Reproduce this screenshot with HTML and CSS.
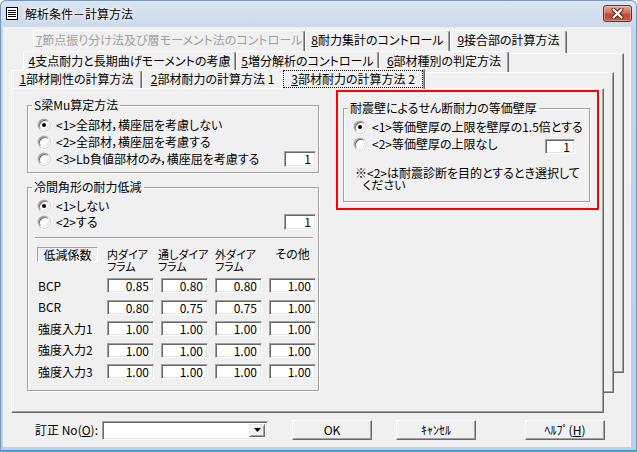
FILE: index.html
```html
<!DOCTYPE html>
<html lang="ja">
<head>
<meta charset="utf-8">
<title>解析条件－計算方法</title>
<link rel="stylesheet" href="styles.css">
</head>
<body>
<div class="window">
  <div class="titlebar">
    <svg class="appicon" width="12" height="13" viewBox="0 0 12 13">
      <rect x="0.5" y="0.5" width="11" height="12" fill="#fff" stroke="#000"/>
      <path d="M2 3.5h8M2 5.5h8M2 7.5h8M2 9.5h8" stroke="#000"/>
    </svg>
    <span class="title">解析条件－計算方法</span>
    <div class="close">
      <svg width="13" height="11" viewBox="0 0 13 11">
        <path d="M2.5 1.5l8 8M10.5 1.5l-8 8" stroke="#5a1c14" stroke-width="4" stroke-linecap="round"/>
        <path d="M2.5 1.5l8 8M10.5 1.5l-8 8" stroke="#fff" stroke-width="2.2" stroke-linecap="round"/>
      </svg>
    </div>
  </div>

  <div class="client">
    <div class="sheet">
      <div class="layer l3">
        <div class="tabs">
          <div class="tab disabled w7"><u>7</u>節点振り分け法及び層モーメント法のコントロール</div>
          <div class="tab w8"><u>8</u>耐力集計のコントロール</div>
          <div class="tab w9"><u>9</u>接合部の計算方法</div>
        </div>
        <div class="page"></div>
      </div>

      <div class="layer l2">
        <div class="tabs">
          <div class="tab w4"><u>4</u>支点耐力と長期曲げモーメントの考慮</div>
          <div class="tab w5"><u>5</u>増分解析のコントロール</div>
          <div class="tab w6"><u>6</u>部材種別の判定方法</div>
        </div>
        <div class="page"></div>
      </div>

      <div class="layer l1">
        <div class="tabs">
          <div class="tab w1"><u>1</u>部材剛性の計算方法</div>
          <div class="tab w2"><u>2</u>部材耐力の計算方法 1</div>
          <div class="tab selected w3"><span class="focus"><u>3</u>部材耐力の計算方法 2</span></div>
        </div>
        <div class="page main">
          <div class="left-col">
            <fieldset class="group g1">
              <legend>S梁Mu算定方法</legend>
              <div class="opt"><span class="radio checked"></span><span>&lt;1&gt;全部材，横座屈を考慮しない</span></div>
              <div class="opt"><span class="radio"></span><span>&lt;2&gt;全部材，横座屈を考慮する</span></div>
              <div class="opt"><span class="radio"></span><span>&lt;3&gt;Lb負値部材のみ，横座屈を考慮する</span><span class="edit small">1</span></div>
            </fieldset>

            <fieldset class="group g2">
              <legend>冷間角形の耐力低減</legend>
              <div class="opt short"><span class="radio checked"></span><span>&lt;1&gt;しない</span></div>
              <div class="opt"><span class="radio"></span><span>&lt;2&gt;する</span><span class="edit small">1</span></div>
              <div class="separator"></div>
              <div class="coef">
                <div class="coef-title">低減係数</div>
                <div class="colhead c1">内ダイア<br>フラム</div>
                <div class="colhead c2">通しダイア<br>フラム</div>
                <div class="colhead c3">外ダイア<br>フラム</div>
                <div class="colhead c4">その他</div>

                <div class="rowlabel">BCP</div>
                <div class="edit">0.85</div><div class="edit">0.80</div><div class="edit">0.80</div><div class="edit">1.00</div>

                <div class="rowlabel">BCR</div>
                <div class="edit">0.80</div><div class="edit">0.75</div><div class="edit">0.75</div><div class="edit">1.00</div>

                <div class="rowlabel">強度入力1</div>
                <div class="edit">1.00</div><div class="edit">1.00</div><div class="edit">1.00</div><div class="edit">1.00</div>

                <div class="rowlabel">強度入力2</div>
                <div class="edit">1.00</div><div class="edit">1.00</div><div class="edit">1.00</div><div class="edit">1.00</div>

                <div class="rowlabel">強度入力3</div>
                <div class="edit">1.00</div><div class="edit">1.00</div><div class="edit">1.00</div><div class="edit">1.00</div>
              </div>
            </fieldset>
          </div>

          <div class="highlight">
            <fieldset class="group g3">
              <legend>耐震壁によるせん断耐力の等価壁厚</legend>
              <div class="opt short"><span class="radio checked"></span><span>&lt;1&gt;等価壁厚の上限を壁厚の1.5倍とする</span></div>
              <div class="opt"><span class="radio"></span><span>&lt;2&gt;等価壁厚の上限なし</span><span class="edit small">1</span></div>
              <p class="note">※&lt;2&gt;は耐震診断を目的とするとき選択して<br>ください</p>
            </fieldset>
          </div>
        </div>
      </div>
    </div>

    <div class="footer">
      <span class="label">訂正 No(<u>O</u>):</span>
      <div class="combo"><span class="combo-field"></span><span class="combo-btn"><svg width="7" height="4" viewBox="0 0 7 4"><path d="M0 0h7L3.5 4z" fill="#000"/></svg></span></div>
      <div class="button ok">OK</div>
      <div class="button cancel">ｷｬﾝｾﾙ</div>
      <div class="button help">ﾍﾙﾌﾟ(<u>H</u>)</div>
    </div>
  </div>
</div>
</body>
</html>
```

FILE: styles.css
```css
* { box-sizing: border-box; }
html, body { margin: 0; padding: 0; }
body {
  font-family: "Noto Sans CJK JP", "Noto Sans", sans-serif;
  font-size: 12px;
  line-height: 14px;
  color: #000;
  font-feature-settings: "palt";
  background: #ffffff;
}
u { text-decoration: underline; text-underline-offset: 1px; }

/* ---------- window frame ---------- */
.window {
  width: 637px;
  height: 452px;
  display: flex;
  flex-direction: column;
  padding: 0 6px 5px 3px;
  background: linear-gradient(#dce6f1 0, #cbd9ea 27px, #c2d4ea 28px, #bcd0e8 100%);
  border-radius: 6px 6px 0 0;
  box-shadow: inset 0 0 0 1px #7b97b8, inset 0 -2px 0 #3c9ad0;
}
.titlebar {
  height: 27px;
  flex: none;
  display: flex;
  align-items: center;
  padding-left: 3px;
  margin-right: -6px;
}
.appicon { flex: none; }
.title {
  margin-left: 7px;
  font-size: 12px;
  color: #000;
  text-shadow: 0 0 6px #fff, 0 0 3px #fff;
}
.close {
  margin-left: auto;
  margin-right: 5px;
  align-self: flex-start;
  margin-top: 5px;
  width: 29px;
  height: 17px;
  border: 1px solid #6e2a22;
  border-radius: 3px;
  background: linear-gradient(#e3a79c 0%, #d0705f 45%, #c24a36 55%, #c65a43 100%);
  box-shadow: inset 0 0 0 1px rgba(255,255,255,0.35);
  display: flex;
  align-items: center;
  justify-content: center;
}

.client {
  flex: 1;
  background: #f0f0f0;
  display: flex;
  flex-direction: column;
}

/* ---------- stacked property pages ---------- */
.sheet {
  display: grid;
}
.layer {
  grid-area: 1 / 1;
  display: flex;
  flex-direction: column;
  align-self: start;
}
.l3 { margin: 3px 7px 0 30px; height: 343px; }
.l2 { margin: 24px 17px 0 20px; height: 342px; }
.l1 { margin: 41px 27px 0 8px; height: 345px; }

.tabs {
  display: flex;
  align-items: flex-end;
  flex: none;
}
.l3 .tabs { height: 23px; }
.l2 .tabs { height: 21px; }
.l1 .tabs { height: 20px; }

.tab {
  height: 100%;
  background: #f0f0f0;
  border-top: 1px solid #fff;
  border-left: 1px solid #fff;
  border-right: 1px solid #696969;
  box-shadow: inset -1px 0 0 #a0a0a0;
  border-radius: 2px 3px 0 0;
  text-align: center;
  padding-top: 2px;
  white-space: nowrap;
  flex: none;
}
.l1 .tab { height: 18px; padding-top: 1px; }
.tab.disabled { color: #a0a0a0; }
.tab.selected {
  position: relative;
  z-index: 1;
  height: 21px;
  margin-bottom: -1px;
  margin-left: -2px;
  padding: 1px 1px 0 1px;
}
.focus {
  display: block;
  border: 1px dotted #000;
  height: 18px;
  padding-top: 1px;
}
.w7 { width: 272px; }
.w8 { width: 145px; }
.w9 { width: 117px; }
.w4 { width: 213px; }
.w5 { width: 143px; }
.w6 { width: 130px; }
.w1 { width: 131px; }
.w2 { width: 141px; }
.w3 { width: 144px; }

.page {
  flex: 1;
  background: #f0f0f0;
  border-top: 1px solid #fff;
  border-left: 1px solid #fff;
  border-right: 1px solid #696969;
  border-bottom: 1px solid #696969;
  box-shadow: inset -1px -1px 0 #a0a0a0;
}
.page.main {
  display: flex;
  align-items: flex-start;
  padding: 1px 0 0 15px;
}

/* ---------- group boxes ---------- */
.left-col {
  width: 292px;
  margin-top: 8px;
  display: flex;
  flex-direction: column;
  gap: 7px;
}
.group {
  margin: 0;
  padding: 0;
  border: 1px solid #a0a0a0;
  box-shadow: inset 1px 1px 0 #fff, 1px 1px 0 #fff;
  min-width: 0;
}
.group legend {
  padding: 0 2px;
  margin-left: 4px;
  line-height: 14px;
}
.g1 { padding: 4px 2px 5px 0; }
.g2 { padding: 4px 2px 11px 0; }

.opt {
  display: flex;
  align-items: center;
  height: 17px;
  padding-left: 10px;
  white-space: nowrap;
}
.opt.short { height: 15px; }
.radio {
  flex: none;
  position: relative;
  width: 12px;
  height: 12px;
  margin-right: 6px;
  border-radius: 50%;
  background: #fff;
  border: 1px solid;
  border-color: #a0a0a0 #fff #fff #a0a0a0;
  box-shadow: inset 1px 1px 0 #696969, inset -1px -1px 0 #e3e3e3, 0 0 0 0.5px #b8b8b8;
}
.radio.checked::after {
  content: "";
  position: absolute;
  left: 3px;
  top: 3px;
  width: 4px;
  height: 4px;
  border-radius: 50%;
  background: #000;
}

.edit {
  background: #fff;
  border: 1px solid;
  border-color: #a0a0a0 #fff #fff #a0a0a0;
  box-shadow: inset 1px 1px 0 #696969, inset -1px -1px 0 #e3e3e3;
  text-align: right;
  padding-right: 4px;
  height: 16px;
  line-height: 14px;
  font-size: 12px;
}
.edit.small {
  width: 32px;
  margin-left: auto;
}
.separator {
  margin: 7px 3px 0 7px;
  height: 2px;
  border-top: 1px solid #a0a0a0;
  border-bottom: 1px solid #fff;
}

/* ---------- coefficient table ---------- */
.coef {
  display: grid;
  grid-template-columns: 63px repeat(4, 47px);
  grid-template-rows: 24.5px repeat(5, 15px);
  column-gap: 7px;
  row-gap: 6.5px;
  margin: 8px 0 0 9px;
}
.coef .edit { height: 15px; line-height: 13px; }
.coef-title {
  width: 61px;
  height: 15px;
  border-top: 1px solid #a0a0a0;
  border-left: 1px solid #a0a0a0;
  border-bottom: 1px solid #fff;
  border-right: 1px solid #fff;
  text-align: center;
  line-height: 13px;
  white-space: nowrap;
}
.colhead {
  font-size: 11px;
  line-height: 12px;
  padding-top: 0.5px;
  white-space: nowrap;
}
.c2 { margin-left: -3px; }
.c4 { text-align: center; font-size: 12px; }
.rowlabel {
  align-self: center;
  padding-left: 1px;
  white-space: nowrap;
}

/* ---------- highlighted right group ---------- */
.highlight {
  margin-left: 17px;
  width: 263px;
  height: 120px;
  border: 2px solid #ff0000;
  padding: 9px 7px 6px 5px;
  display: flex;
}
.g3 {
  flex: 1;
  padding: 3px 14px 0 0;
}
.g3 .opt { height: 20px; }
.g3 .opt.short { height: 15px; margin-top: 1px; }
.g3 .edit.small { width: 30px; height: 15px; line-height: 13px; margin-top: 4px; }
.note {
  margin: 13px 0 0 11px;
  line-height: 12px;
  padding-left: 8px;
  text-indent: -8px;
  white-space: nowrap;
}

/* ---------- footer ---------- */
.footer {
  display: flex;
  align-items: center;
  height: 20px;
  margin-top: 7px;
  padding-left: 32px;
}
.label { white-space: nowrap; }
.combo {
  margin-left: 4px;
  width: 166px;
  height: 19px;
  display: flex;
  background: #fff;
  border: 1px solid;
  border-color: #a0a0a0 #fff #fff #a0a0a0;
  box-shadow: inset 1px 1px 0 #696969, inset -1px -1px 0 #e3e3e3;
  padding: 2px;
}
.combo-field { flex: 1; }
.combo-btn {
  width: 16px;
  background: #f0f0f0;
  border-top: 1px solid #e3e3e3;
  border-left: 1px solid #e3e3e3;
  border-right: 1px solid #696969;
  border-bottom: 1px solid #696969;
  box-shadow: inset 1px 1px 0 #fff, inset -1px -1px 0 #a0a0a0;
  display: flex;
  align-items: center;
  justify-content: center;
}
.button {
  width: 80px;
  height: 20px;
  background: #f0f0f0;
  border-top: 1px solid #fff;
  border-left: 1px solid #fff;
  border-right: 1px solid #696969;
  border-bottom: 1px solid #696969;
  box-shadow: inset -1px -1px 0 #a0a0a0;
  text-align: center;
  line-height: 17px;
  white-space: nowrap;
}
.ok { margin-left: 24px; }
.cancel { margin-left: 24px; }
.help { margin-left: 49px; }
```
